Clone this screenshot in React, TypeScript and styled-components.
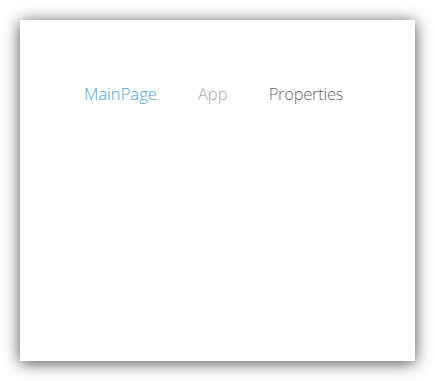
import React from "react";
import styled, { createGlobalStyle } from "styled-components";

const Global = createGlobalStyle`
  html, body { margin: 0; padding: 0; background: #ffffff; }
  body { width: 435px; height: 381px; overflow: hidden; }
`;

const Stage = styled.div`
  padding: 20px;
  box-sizing: border-box;
  width: 435px;
  height: 381px;
`;

const Card = styled.div`
  width: 395px;
  height: 341px;
  background: #ffffff;
  box-shadow: 0 2px 15px rgba(0, 0, 0, 0.7);
  box-sizing: border-box;
  padding: 63px 0 0 43.5px;
`;

const Tabs = styled.nav`
  display: flex;
  align-items: baseline;
`;

const Tab = styled.div<{ $tone: "active" | "muted" | "normal" }>`
  padding: 0 20.5px;
  font-family: "Open Sans", "Segoe UI", sans-serif;
  font-weight: 300;
  font-size: 16.6px;
  line-height: 22px;
  letter-spacing: ${(p) => (p.$tone === "normal" ? "-0.3px" : "0")};
  color: ${(p) =>
    p.$tone === "active" ? "#4aa6e6" : p.$tone === "muted" ? "#ababab" : "#6a6a6a"};
`;

export default function App() {
  return (
    <>
      <Global />
      <Stage>
        <Card>
          <Tabs>
            <Tab $tone="active">MainPage</Tab>
            <Tab $tone="muted">App</Tab>
            <Tab $tone="normal">Properties</Tab>
          </Tabs>
        </Card>
      </Stage>
    </>
  );
}
